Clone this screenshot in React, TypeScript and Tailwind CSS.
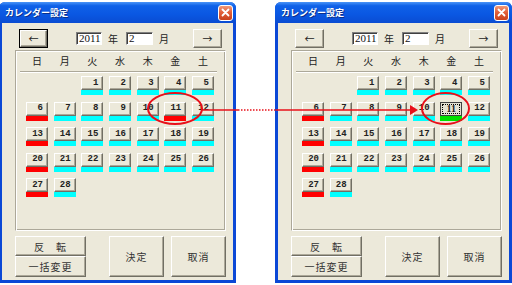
import React from 'react';
import clsx from 'clsx';

const jp = '[font-family:"Noto_Sans_CJK_JP","Noto_Sans",sans-serif]';

const WEEK = ['日', '月', '火', '水', '木', '金', '土'];

type Mode = 'before' | 'after';

const raised =
  'border border-t-white border-l-white border-r-[#716f64] border-b-[#716f64] shadow-[inset_-1px_-1px_0_#aca899]';

const sunken =
  'border border-t-[#808080] border-l-[#808080] border-r-white border-b-white shadow-[inset_1px_1px_0_#404040]';

const DayCell: React.FC<{ day: number; mode: Mode }> = ({ day, mode }) => {
  const sunday = day % 7 === 6;
  const holiday = day === 11;
  const pressed = holiday && mode === 'after';

  let bar = 'bg-[#00ffff]';
  if (sunday) bar = 'bg-[#ff0000]';
  if (holiday) bar = mode === 'after' ? 'bg-[#00e000]' : 'bg-[#ff0000]';

  return (
    <div className="flex flex-col">
      {pressed ? (
        <div className="flex h-[14px] items-center justify-center border border-[#404040] bg-[#e4e1d2] p-px">
          <span className="flex h-full w-full items-center justify-center border border-dotted border-black text-[10px] leading-none font-bold text-[#222] [font-family:'Liberation_Serif',serif]">
            11
          </span>
        </div>
      ) : (
        <div
          className={clsx(
            'flex h-[14px] items-center justify-end bg-[#ece9da] pr-[4px] text-[9px] leading-none font-bold text-[#222] [font-family:"Liberation_Mono",monospace]',
            raised,
          )}
        >
          {day}
        </div>
      )}
      <div className={clsx('h-[5px]', bar)} />
    </div>
  );
};

const NavButton: React.FC<{ label: string; focused?: boolean }> = ({ label, focused }) => (
  <div
    className={clsx(
      'flex h-[19px] w-[29px] items-center justify-center bg-[#ece9da] text-[10px] text-[#222]',
      focused ? 'border border-black p-0' : '',
    )}
  >
    <div className={clsx('flex h-full w-full items-center justify-center', raised)}>
      <span className={jp}>{label}</span>
    </div>
  </div>
);

const Window: React.FC<{ mode: Mode; className?: string }> = ({ mode, className }) => {
  const cells: (number | null)[] = [null, null];
  for (let d = 1; d <= 28; d++) cells.push(d);

  return (
    <div className={clsx('flex h-[281px] w-[237px] flex-col overflow-hidden rounded-t-[6px] bg-[#0b48d6]', className)}>
      {/* title bar */}
      <div className="flex h-[21px] items-center justify-between bg-[linear-gradient(180deg,#4a94f7_0%,#0f61e8_18%,#0a57e2_60%,#0a4cd2_100%)] pr-[3px] pl-[6px]">
        <span className={clsx('text-[9px] font-bold text-white [text-shadow:1px_1px_0_#0a2f8a]', jp)}>
          カレンダー設定
        </span>
        <div className="flex h-[16px] w-[15px] items-center justify-center rounded-[3px] border border-white bg-[linear-gradient(180deg,#f09a7a_0%,#e2603a_45%,#c8401b_100%)]">
          <svg width="9" height="9" viewBox="0 0 9 9">
            <path d="M1.5 1.5 L7.5 7.5 M7.5 1.5 L1.5 7.5" stroke="white" strokeWidth="1.8" strokeLinecap="round" />
          </svg>
        </div>
      </div>

      {/* body */}
      <div className="mx-[3px] mb-[3px] flex flex-1 flex-col bg-[#ece9da]">
        {/* year / month row */}
        <div className="flex items-center pt-[6px] pl-[17px]">
          <NavButton label="←" focused={mode === 'before'} />
          <div className={clsx('ml-[28px] flex h-[13px] w-[26px] items-center bg-white pl-[2px] text-[11px] leading-none text-[#111] [font-family:"Liberation_Serif",serif]', sunken)}>
            2011
          </div>
          <span className={clsx('ml-[6px] w-[10px] text-[10px] leading-none text-[#222]', jp)}>年</span>
          <div className={clsx('ml-[8px] flex h-[13px] w-[27px] items-center bg-white pl-[2px] text-[11px] leading-none text-[#111] [font-family:"Liberation_Serif",serif]', sunken)}>
            2
          </div>
          <span className={clsx('ml-[6px] w-[10px] text-[10px] leading-none text-[#222]', jp)}>月</span>
          <div className="ml-[24px]">
            <NavButton label="→" />
          </div>
        </div>

        {/* calendar frame */}
        <div className="mt-[2px] ml-[13px] flex h-[181px] w-[211px] flex-col border border-t-[#aca899] border-r-white border-b-white border-l-[#aca899] shadow-[inset_1px_1px_0_white,inset_-1px_-1px_0_#aca899]">
          <div className="mt-[4px] ml-[10px] grid grid-cols-[repeat(7,22px)] gap-x-[5.67px]">
            {WEEK.map((w) => (
              <span key={w} className={clsx('text-center text-[10px] leading-[12px] text-[#222]', jp)}>
                {w}
              </span>
            ))}
          </div>
          <div className="mt-[4px] mr-[8px] ml-[4px] h-[2px] border-t border-b border-t-[#aca899] border-b-white" />
          <div className="mt-[3px] ml-[10px] grid grid-cols-[repeat(7,22px)] gap-x-[5.67px] gap-y-[6.5px]">
            {cells.map((d, i) => (d === null ? <div key={`e${i}`} /> : <DayCell key={d} day={d} mode={mode} />))}
          </div>
        </div>

        {/* bottom buttons */}
        <div className={clsx('mt-[5px] ml-[13px] flex items-stretch text-[10px] tracking-[1px] text-[#333]', jp)}>
          <div className="flex w-[71px] flex-col">
            <div className={clsx('flex h-[20px] items-center justify-center', raised)}>反　転</div>
            <div className={clsx('flex h-[21px] items-center justify-center', raised)}>一括変更</div>
          </div>
          <div className={clsx('ml-[23px] flex h-[41px] w-[55px] items-center justify-center', raised)}>決定</div>
          <div className={clsx('ml-[7px] flex h-[41px] w-[55px] items-center justify-center', raised)}>取消</div>
        </div>
      </div>
    </div>
  );
};

export default function App() {
  return (
    <div className="relative flex h-[285px] w-[512px] items-start overflow-hidden bg-white pt-[2px]">
      <Window mode="before" className="-ml-px" />
      <Window mode="after" className="ml-[39px]" />

      {/* annotation overlay */}
      <svg className="pointer-events-none absolute inset-0" width="512" height="285" viewBox="0 0 512 285">
        <ellipse cx="175" cy="108.5" rx="27" ry="15.5" fill="none" stroke="#e8101a" strokeWidth="2" />
        <ellipse cx="445.5" cy="108.5" rx="23.5" ry="15.5" fill="none" stroke="#e8101a" strokeWidth="2" />
        <line x1="202" y1="110" x2="238" y2="110" stroke="#e8101a" strokeWidth="1.5" />
        <line x1="238" y1="110" x2="276" y2="110" stroke="#e8101a" strokeWidth="1.5" strokeDasharray="1.5 1.5" />
        <line x1="276" y1="110" x2="411" y2="110" stroke="#e8101a" strokeWidth="1.5" />
        <polygon points="410,105 418,110 410,115" fill="#e8101a" />
      </svg>
    </div>
  );
}
